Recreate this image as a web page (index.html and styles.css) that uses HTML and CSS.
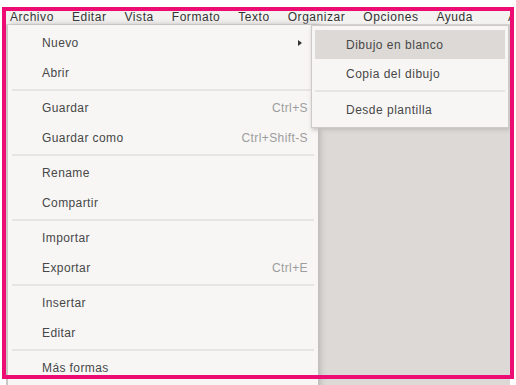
FILE: index.html
```html
<!DOCTYPE html>
<html>
<head>
	<title>Archivo</title>
	<meta charset="utf-8">
	<link rel="stylesheet" href="styles.css">
</head>
<body>
<div id="screen">
	<!-- barra de menus -->
	<div class="menuBar">
		<span class="open">Archivo</span>
		<span>Editar</span>
		<span>Vista</span>
		<span>Formato</span>
		<span>Texto</span>
		<span>Organizar</span>
		<span>Opciones</span>
		<span>Ayuda</span>
		<span class="last">A</span>
	</div>

	<div class="workspace">
		<div class="dropMenu">
			<div class="item hasSub"><span>Nuevo</span><i class="arrow"></i></div>
			<div class="item"><span>Abrir</span></div>
			<div class="sep"></div>
			<div class="item"><span>Guardar</span><em>Ctrl+S</em></div>
			<div class="item"><span>Guardar como</span><em>Ctrl+Shift-S</em></div>
			<div class="sep"></div>
			<div class="item"><span>Rename</span></div>
			<div class="item"><span>Compartir</span></div>
			<div class="sep"></div>
			<div class="item"><span>Importar</span></div>
			<div class="item"><span>Exportar</span><em>Ctrl+E</em></div>
			<div class="sep"></div>
			<div class="item"><span>Insertar</span></div>
			<div class="item"><span>Editar</span></div>
			<div class="sep"></div>
			<div class="item"><span>Más formas</span></div>

			<div class="subMenu">
				<div class="item active"><span>Dibujo en blanco</span></div>
				<div class="item"><span>Copia del dibujo</span></div>
				<div class="sep"></div>
				<div class="item"><span>Desde plantilla</span></div>
			</div>
		</div>
	</div>
</div>

<!-- marco de resaltado -->
<div class="highlight"></div>
</body>
</html>
```

FILE: styles.css
```css
html,body{
	padding: 0;
	margin: 0;
	height: 100%;
	overflow: hidden;
}

body{
	background-color: #fff;
	font-family: "Liberation Sans", Arial, sans-serif;
	font-size: 12px;
	color: #3a3a3a;
}

#screen{
	margin: 10px 6px 0 6px;
	height: 375px;
	display: flex;
	flex-direction: column;
	overflow: hidden;
}

.menuBar{
	height: 14px;
	line-height: 14px;
	background-color: #f3f2f1;
	border-bottom: 1px solid #d6d4d2;
	display: flex;
	gap: 18px;
	padding-left: 4px;
	white-space: nowrap;
	letter-spacing: 0.55px;
	color: #333;
}
.menuBar .last{
	margin-left: 17px;
}

.workspace{
	flex: 1;
	position: relative;
	background-color: #dcd9d6;
	border-left: 2px solid #cfccc9;
}

.dropMenu{
	position: absolute;
	top: 0;
	left: 0;
	width: 310px;
	bottom: -40px;
	padding-top: 3px;
	background-color: #f7f6f5;
	box-shadow: 2px 0 6px 0 #b5b2af;
	z-index: 5;
}

.item{
	height: 30px;
	display: flex;
	align-items: center;
	justify-content: space-between;
	padding: 0 10px 0 34px;
	color: #474747;
	letter-spacing: 0.4px;
	white-space: nowrap;
}

.item em{
	font-style: normal;
	color: #9d9d9d;
}

.sep{
	height: 2px;
	margin: 1px 4px 2px 4px;
	background-color: #e7e5e3;
}

.arrow{
	width: 0;
	height: 0;
	border-top: 3px solid transparent;
	border-bottom: 3px solid transparent;
	border-left: 4px solid #333;
	margin-right: 6px;
}

.subMenu{
	position: absolute;
	top: 0;
	left: 303px;
	width: 196px;
	padding: 4px 0 3px 0;
	background-color: #f7f6f5;
	border: 1px solid #cdcac7;
	box-shadow: 1px 2px 4px 0 #c2bfbc;
}

.subMenu .item{
	height: 29px;
	margin: 0 3px;
	padding-left: 31px;
	letter-spacing: 0.5px;
}

.subMenu .active{
	background-color: #dcd9d6;
}

.subMenu .sep{
	margin: 2px 3px 3px 3px;
}

.highlight{
	position: absolute;
	left: 2px;
	top: 7px;
	width: 512px;
	height: 372px;
	box-sizing: border-box;
	border: 4px solid #ec0c74;
	z-index: 10;
}
```
